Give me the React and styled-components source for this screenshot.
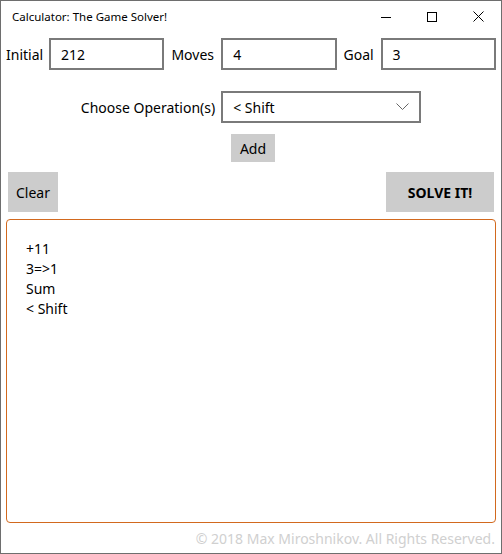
import React from 'react';
import styled, { createGlobalStyle } from 'styled-components';

const Global = createGlobalStyle`
  html, body { margin: 0; padding: 0; background: #fff; overflow: hidden; }
  * { box-sizing: border-box; }
`;

const Window = styled.div`
  width: 502px;
  height: 554px;
  border: 1px solid #6e6e6e;
  background: #fff;
  display: flex;
  flex-direction: column;
  font-family: "Segoe UI", "Noto Sans", sans-serif;
  font-size: 14px;
  color: #000;
`;

const TitleBar = styled.div`
  height: 31px;
  display: flex;
  align-items: center;
  padding-left: 11px;
`;

const Title = styled.div`
  flex: 1;
  font-size: 11.5px;
`;

const WinButton = styled.div`
  width: 46px;
  height: 31px;
  display: flex;
  align-items: center;
  justify-content: center;
`;

const Row = styled.div`
  display: flex;
  align-items: center;
  gap: ${p => p.$gap || 7}px;
  justify-content: ${p => p.$justify || 'flex-start'};
  padding: 0 ${p => p.$pad || 0}px;
  margin-top: ${p => p.$top || 0}px;
`;

const Label = styled.label`
  width: ${p => p.$w}px;
  white-space: nowrap;
`;

const Field = styled.div`
  width: ${p => p.$w}px;
  height: 32px;
  border: 2px solid #7a7a7a;
  display: flex;
  align-items: center;
  justify-content: space-between;
  padding: 0 10px;
`;

const Button = styled.div`
  background: #cccccc;
  width: ${p => p.$w}px;
  height: ${p => p.$h}px;
  display: flex;
  align-items: center;
  justify-content: center;
  font-weight: ${p => (p.$bold ? 700 : 400)};
`;

const Output = styled.div`
  margin: 7px 5px 0;
  height: 304px;
  border: 1px solid #d2691e;
  border-radius: 4px;
  padding: 19px 19px;
  line-height: 20px;
`;

const Footer = styled.div`
  text-align: right;
  color: #d0d0d0;
  padding-right: 6px;
  margin-top: 6px;
`;

const ops = ['+11', '3=>1', 'Sum', '< Shift'];

export default function App() {
  return (
    <Window>
      <Global />
      <TitleBar>
        <Title>Calculator: The Game Solver!</Title>
        <WinButton>
          <svg width="10" height="10" viewBox="0 0 10 10"><path d="M0 5.5h10" stroke="#000" strokeWidth="1" /></svg>
        </WinButton>
        <WinButton>
          <svg width="10" height="10" viewBox="0 0 10 10"><rect x="0.5" y="0.5" width="9" height="9" fill="none" stroke="#000" strokeWidth="1" /></svg>
        </WinButton>
        <WinButton>
          <svg width="11" height="11" viewBox="0 0 11 11"><path d="M0.5 0.5l10 10M10.5 0.5l-10 10" stroke="#000" strokeWidth="1" /></svg>
        </WinButton>
      </TitleBar>

      <Row $pad={5} $top={6}>
        <Label $w={36}>Initial</Label>
        <Field $w={116}>212</Field>
        <Label $w={43}>Moves</Label>
        <Field $w={116}>4</Field>
        <Label $w={30}>Goal</Label>
        <Field $w={116}>3</Field>
      </Row>

      <Row $justify="center" $gap={6} $top={21}>
        <Label>Choose Operation(s)</Label>
        <Field $w={200}>
          <span>&lt; Shift</span>
          <svg width="13" height="8" viewBox="0 0 13 8"><path d="M0.5 0.5l6 6 6-6" fill="none" stroke="#666" strokeWidth="1" /></svg>
        </Field>
      </Row>

      <Row $justify="center" $top={11}>
        <Button $w={44} $h={28} style={{ marginLeft: 4 }}>Add</Button>
      </Row>

      <Row $justify="space-between" $pad={7} $top={10}>
        <Button $w={50} $h={40}>Clear</Button>
        <Button $w={108} $h={40} $bold>SOLVE IT!</Button>
      </Row>

      <Output>
        {ops.map(o => <div key={o}>{o}</div>)}
      </Output>

      <Footer>© 2018 Max Miroshnikov. All Rights Reserved.</Footer>
    </Window>
  );
}
